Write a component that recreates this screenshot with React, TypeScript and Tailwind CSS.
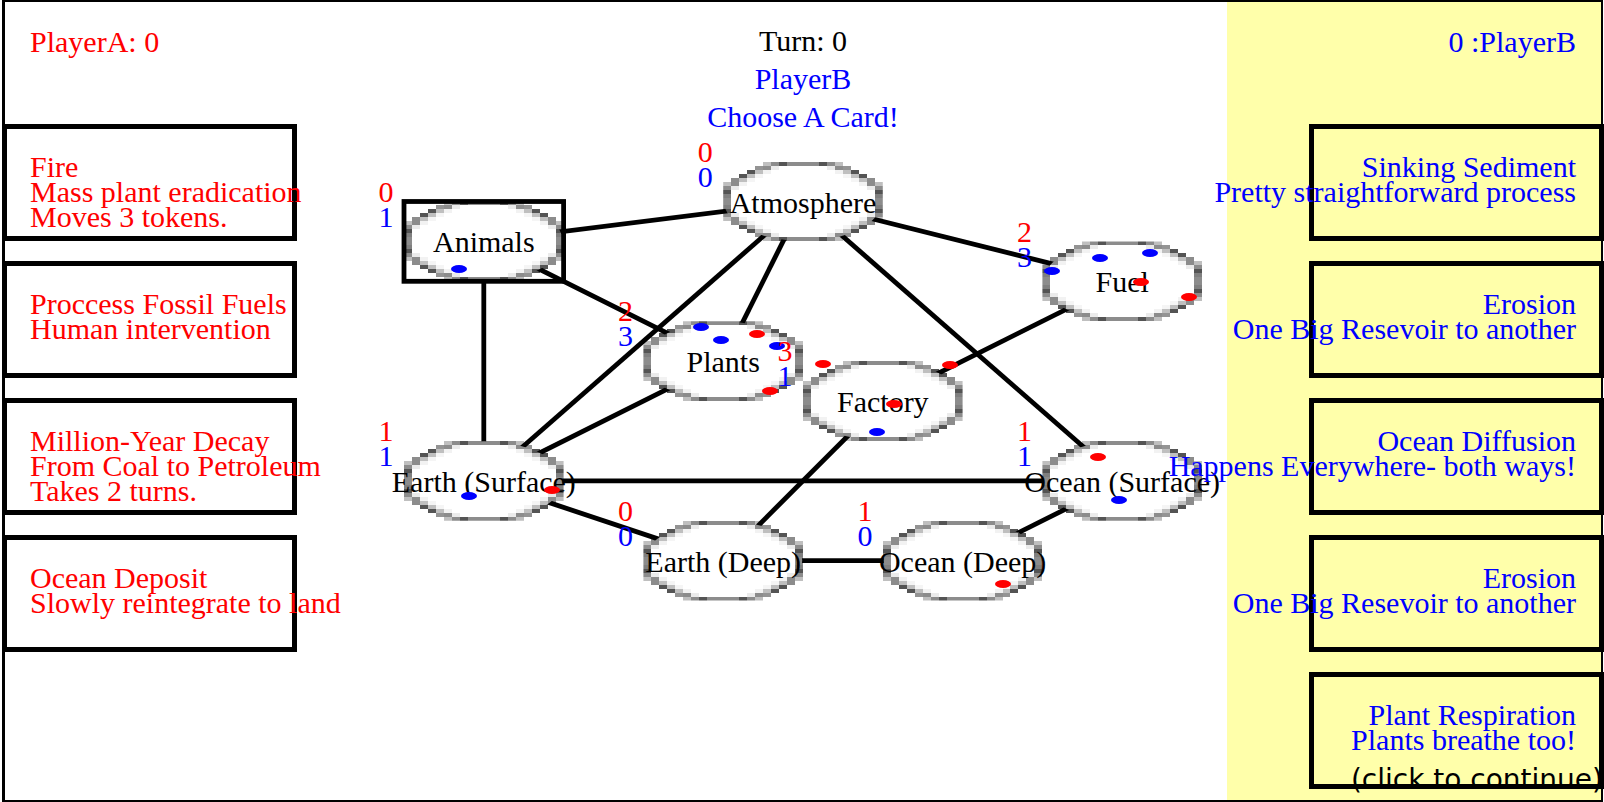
import React from "react";

type Side = "A" | "B";

interface Card {
  title: string;
  lines: string[];
}

interface Place {
  name: string;
  x: number;
  y: number;
  a: number;
  b: number;
  selected?: boolean;
}

/* Board units: every place sits on a 1596 x 798 canvas. */
const BOARD_W = 1596;
const BOARD_H = 798;
const NODE_W = 159.6;
const NODE_H = 79.8;

const places: Record<string, Place> = {
  animals: { name: "Animals", x: 0.3, y: 0.3, a: 0, b: 1, selected: true },
  atmosphere: { name: "Atmosphere", x: 0.5, y: 0.25, a: 0, b: 0 },
  fuel: { name: "Fuel", x: 0.7, y: 0.35, a: 2, b: 3 },
  plants: { name: "Plants", x: 0.45, y: 0.45, a: 2, b: 3 },
  factory: { name: "Factory", x: 0.55, y: 0.5, a: 3, b: 1 },
  earthSurface: { name: "Earth (Surface)", x: 0.3, y: 0.6, a: 1, b: 1 },
  oceanSurface: { name: "Ocean (Surface)", x: 0.7, y: 0.6, a: 1, b: 1 },
  earthDeep: { name: "Earth (Deep)", x: 0.45, y: 0.7, a: 0, b: 0 },
  oceanDeep: { name: "Ocean (Deep)", x: 0.6, y: 0.7, a: 1, b: 0 },
};

const links: [string, string][] = [
  ["animals", "atmosphere"],
  ["animals", "plants"],
  ["animals", "earthSurface"],
  ["atmosphere", "fuel"],
  ["atmosphere", "plants"],
  ["atmosphere", "earthSurface"],
  ["atmosphere", "oceanSurface"],
  ["plants", "earthSurface"],
  ["factory", "fuel"],
  ["factory", "earthDeep"],
  ["earthSurface", "oceanSurface"],
  ["earthSurface", "earthDeep"],
  ["earthDeep", "oceanDeep"],
  ["oceanDeep", "oceanSurface"],
];

const tokens: [Side, number, number][] = [
  ["B", 454, 267],
  ["B", 696, 325],
  ["B", 716, 338],
  ["B", 772, 344],
  ["A", 752, 332],
  ["A", 765, 389],
  ["A", 818, 362],
  ["A", 945, 363],
  ["A", 889, 402],
  ["B", 872, 430],
  ["B", 1047, 269],
  ["B", 1095, 256],
  ["B", 1145, 251],
  ["A", 1136, 280],
  ["A", 1184, 295],
  ["B", 464, 494],
  ["A", 547, 488],
  ["A", 1093, 455],
  ["B", 1114, 498],
  ["A", 998, 582],
];

const handA: Card[] = [
  { title: "Fire", lines: ["Mass plant eradication", "Moves 3 tokens."] },
  { title: "Proccess Fossil Fuels", lines: ["Human intervention"] },
  { title: "Million-Year Decay", lines: ["From Coal to Petroleum", "Takes 2 turns."] },
  { title: "Ocean Deposit", lines: ["Slowly reintegrate to land"] },
];

const handB: Card[] = [
  { title: "Sinking Sediment", lines: ["Pretty straightforward process"] },
  { title: "Erosion", lines: ["One Big Resevoir to another"] },
  { title: "Ocean Diffusion", lines: ["Happens Everywhere- both ways!"] },
  { title: "Erosion", lines: ["One Big Resevoir to another"] },
  { title: "Plant Respiration", lines: ["Plants breathe too!"] },
];

/* One quarter of the 20 x 20 ring sprite: [row, column, darkness]. */
const ringQuarter: [number, number, number][] = [
  [0, 5, 0.25], [0, 6, 0.45], [0, 7, 0.67], [0, 8, 0.45], [0, 9, 0.45],
  [1, 4, 0.42], [1, 5, 0.45], [1, 6, 0.08],
  [2, 3, 0.67], [2, 4, 0.25], [2, 5, 0.05],
  [3, 2, 0.67], [3, 3, 0.25], [3, 4, 0.04],
  [4, 1, 0.45], [4, 2, 0.25], [4, 3, 0.04],
  [5, 0, 0.25], [5, 1, 0.45], [5, 2, 0.05],
  [6, 0, 0.45], [6, 1, 0.08],
  [7, 0, 0.67], [8, 0, 0.5], [9, 0, 0.45],
];

const ring = ringQuarter.flatMap(([r, c, d]) => [
  [r, c, d],
  [r, 19 - c, d],
  [19 - r, c, d],
  [19 - r, 19 - c, d],
]);

function Ring() {
  return (
    <symbol id="ring" viewBox="0 0 20 20" preserveAspectRatio="none">
      <circle cx="10" cy="10" r="9.9" fill="white" />
      <g shapeRendering="crispEdges">
        {ring.map(([r, c, d]) => (
          <rect key={`${r}-${c}`} x={c} y={r} width="1" height="1" fill="black" fillOpacity={d} />
        ))}
      </g>
    </symbol>
  );
}

function Board() {
  const all = Object.values(places);
  const percent = (n: number) => `${n * 100}%`;
  return (
    <section aria-label="Board" className="absolute inset-0 whitespace-nowrap">
      <svg
        className="absolute inset-0 h-full w-full"
        viewBox={`0 0 ${BOARD_W} ${BOARD_H}`}
        preserveAspectRatio="none"
        aria-hidden="true"
      >
        <Ring />
        {links.map(([from, to]) => (
          <line
            key={from + to}
            x1={places[from].x * BOARD_W}
            y1={places[from].y * BOARD_H}
            x2={places[to].x * BOARD_W}
            y2={places[to].y * BOARD_H}
            stroke="black"
            strokeWidth="4.8"
          />
        ))}
        {all.map((p) => {
          const box = {
            x: p.x * BOARD_W - NODE_W / 2,
            y: p.y * BOARD_H - NODE_H / 2,
            width: NODE_W,
            height: NODE_H,
          };
          return (
            <g key={p.name}>
              <use href="#ring" {...box} />
              {p.selected && <rect {...box} fill="none" stroke="black" strokeWidth="4.8" />}
            </g>
          );
        })}
      </svg>
      {all.map((p) => (
        <span
          key={p.name}
          className="absolute -translate-x-1/2 -translate-y-1/2 pt-px leading-[26px]"
          style={{ left: percent(p.x), top: percent(p.y) }}
        >
          {p.name}
        </span>
      ))}
      <svg
        className="absolute inset-0 h-full w-full"
        viewBox={`0 0 ${BOARD_W} ${BOARD_H}`}
        preserveAspectRatio="none"
        aria-hidden="true"
      >
        {tokens.map(([side, x, y]) => (
          <ellipse key={`${x}-${y}`} cx={x} cy={y} rx="8" ry="4" fill={side === "A" ? "#ff0000" : "#0000ff"} />
        ))}
      </svg>
      {all.map((p) => (
        <div
          key={p.name}
          className="absolute -translate-x-1/2 text-center"
          style={{ left: percent(p.x - 0.0612), top: percent(p.y - 0.0785) }}
        >
          <div className="text-[#ff0000]">{p.a}</div>
          <div className="text-[#0000ff]">{p.b}</div>
        </div>
      ))}
    </section>
  );
}

function Hand({ cards, side }: { cards: Card[]; side: Side }) {
  return (
    <ul className={side === "A" ? "-ml-[3px] flex flex-col items-start gap-5" : "-mr-[3px] flex flex-col items-end gap-5"}>
      {cards.map((card, i) => (
        <li key={i} className="w-[295px]">
          <button
            type="button"
            className={
              "flex min-h-[117px] w-full flex-col justify-start border-[5px] border-black px-[23px] pt-[25px] whitespace-nowrap " +
              (side === "A" ? "items-start" : "items-end")
            }
          >
            <span>{card.title}</span>
            {card.lines.map((line) => (
              <span key={line}>{line}</span>
            ))}
          </button>
        </li>
      ))}
    </ul>
  );
}

export default function App() {
  return (
    <main className="relative mr-px ml-[2px] flex min-h-screen flex-col border-2 border-l-[3px] border-black bg-white font-['Liberation_Serif',serif] text-[30px] leading-[25px] text-black">
      <Board />
      <div className="relative grid flex-1 grid-cols-[374px_1fr_374px]">
        <section className="text-[#ff0000]">
          <h2 className="h-[122px] px-[25px] pt-[27px]">PlayerA: 0</h2>
          <Hand cards={handA} side="A" />
        </section>
        <header className="pt-5 text-center leading-[38px]">
          <h1>Turn: 0</h1>
          <p className="text-[#0000ff]">PlayerB</p>
          <p className="text-[#0000ff]">Choose A Card!</p>
        </header>
        <section className="bg-[#ffffaa] text-right text-[#0000ff]">
          <h2 className="h-[122px] px-[25px] pt-[27px]">0 :PlayerB</h2>
          <Hand cards={handB} side="B" />
        </section>
      </div>
      <button
        type="button"
        className="absolute -right-0.5 bottom-0 font-['DejaVu_Sans',sans-serif] text-[28px] leading-[40px] whitespace-nowrap"
      >
        (click to continue)
      </button>
    </main>
  );
}
